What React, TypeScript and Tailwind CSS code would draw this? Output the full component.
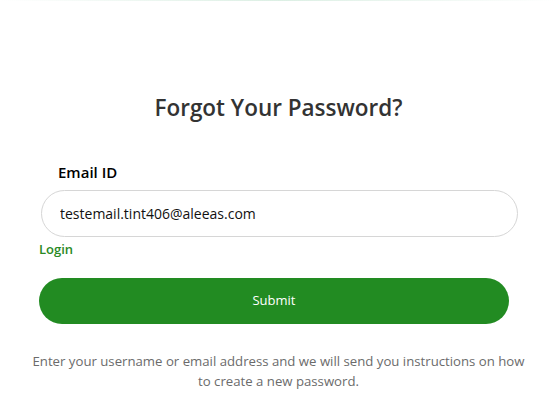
export default function App() {
  return (
    <div className="min-h-[405px] w-[557px] bg-white font-['Open_Sans',sans-serif]">
      <div className="h-px w-full bg-gradient-to-r from-transparent via-[#dcefe4] to-transparent"></div>
      <div className="flex flex-col pt-[92px]">
        <h1 className="text-center text-[22.5px] font-semibold leading-[30px] text-[#333333]">
          Forgot Your Password?
        </h1>

        <label className="ml-[58px] mt-[38px] text-[15px] font-semibold leading-[22px] text-black">
          Email ID
        </label>
        <input
          defaultValue="testemail.tint406@aleeas.com"
          className="ml-[41px] mt-[7px] h-[47px] w-[477px] rounded-full border border-[#d6d6d6] px-[18px] text-[14px] text-[#111] outline-none"
        />
        <a className="ml-[39px] mt-[2px] text-[13px] font-semibold leading-[20px] text-[#2a8a26]">
          Login
        </a>

        <button
          type="button"
          className="ml-[39px] mt-[19px] h-[46px] w-[470px] rounded-full bg-[#228b22] text-[13px] text-white"
        >
          Submit
        </button>

        <p className="mx-auto mt-[27px] w-[500px] text-center text-[13.2px] leading-[20px] text-[#6b6b6b]">
          Enter your username or email address and we will send you instructions on how to create a new password.
        </p>
      </div>
    </div>
  );
}
